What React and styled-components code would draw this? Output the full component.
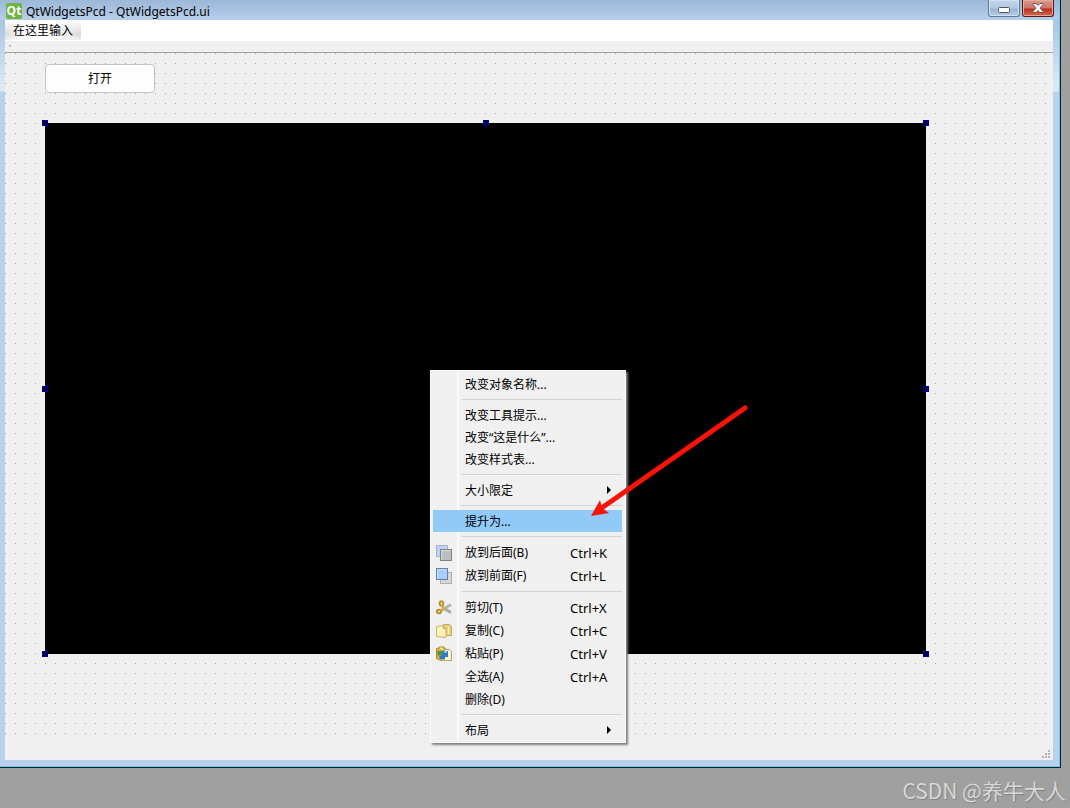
import React from "react";
import styled, { createGlobalStyle } from "styled-components";

const menuItems = [
	{ label: "改变对象名称..." },
	{ divider: true },
	{ label: "改变工具提示..." },
	{ label: "改变“这是什么”..." },
	{ label: "改变样式表..." },
	{ divider: true },
	{ label: "大小限定", submenu: true },
	{ divider: true },
	{ label: "提升为...", active: true },
	{ divider: true },
	{ label: "放到后面(B)", keys: "Ctrl+K", icon: <BackIcon /> },
	{ label: "放到前面(F)", keys: "Ctrl+L", icon: <FrontIcon /> },
	{ divider: true },
	{ label: "剪切(T)", keys: "Ctrl+X", icon: <CutIcon /> },
	{ label: "复制(C)", keys: "Ctrl+C", icon: <CopyIcon /> },
	{ label: "粘贴(P)", keys: "Ctrl+V", icon: <PasteIcon /> },
	{ label: "全选(A)", keys: "Ctrl+A" },
	{ label: "删除(D)" },
	{ divider: true },
	{ label: "布局", submenu: true },
];

const handles = [
	["0%", "0%"],
	["50%", "0%"],
	["100%", "0%"],
	["0%", "50%"],
	["100%", "50%"],
	["0%", "100%"],
	["100%", "100%"],
];

function BackIcon() {
	return (
		<svg width="16" height="16" viewBox="0 0 16 16">
			<rect x="0.5" y="0.5" width="11" height="11" fill="#bdd3f5" stroke="#a3b4d0" />
			<rect x="4.5" y="4.5" width="11" height="11" fill="#bcbfc1" stroke="#808385" />
			<path d="M5.5 14.5v-9h9" fill="none" stroke="#d6d8d9" />
		</svg>
	);
}

function FrontIcon() {
	return (
		<svg width="16" height="16" viewBox="0 0 16 16">
			<rect x="4.5" y="4.5" width="11" height="11" fill="#d5d7d8" stroke="#b0b2b3" />
			<rect x="0.5" y="0.5" width="11" height="11" fill="#a9cdfb" stroke="#6880a8" />
			<path d="M1.5 10.5v-9h9" fill="none" stroke="#c5defc" />
		</svg>
	);
}

function CutIcon() {
	return (
		<svg width="16" height="16" viewBox="0 0 16 16" fill="none">
			<path d="M6 10 15 4.5" stroke="#96968c" strokeWidth="2.6" />
			<path d="M6 10 15 4.5" stroke="#d4d4ca" strokeWidth="1" />
			<path d="M7 8 15 12.500" stroke="#96968c" strokeWidth="2.6" />
			<path d="M7 8 15 12.500" stroke="#c8c8bd" strokeWidth="1" />
			<ellipse cx="5.500" cy="3.500" rx="1.800" ry="2.300" stroke="#b8922c" strokeWidth="2" />
			<ellipse cx="3" cy="11.500" rx="2.200" ry="1.800" stroke="#b8922c" strokeWidth="2" />
			<path d="M6 6 8 8.500 5 10.500" stroke="#cfae4c" strokeWidth="2.600" />
		</svg>
	);
}

function CopyIcon() {
	return (
		<svg width="16" height="16" viewBox="0 0 16 16" strokeLinejoin="round">
			<path d="M7.5 1.5h6l2 2v9h-8z" fill="#e9d282" stroke="#c3a957" />
			<path d="M12.5 4v7" stroke="#fff2bd" />
			<path d="M.5 3.5 7 2.5l3 2.5v9.5l-9.500-1z" fill="#fff2bd" stroke="#cbb267" />
			<path d="m7 2.5.5 3L10 5" fill="#e4c463" stroke="#c4a955" />
		</svg>
	);
}

function PasteIcon() {
	return (
		<svg width="16" height="16" viewBox="0 0 16 16" strokeLinejoin="round">
			<path d="M.5 2.5 7 1l3 2v10l-5 1.500-4.500-2z" fill="#d8b537" stroke="#ab8d2c" />
			<path d="M3 3V1h5v2.500" fill="#f0e4a8" stroke="#a59246" />
			<path d="M8.500 3.500h5l2 2v9h-7z" fill="#fff6cf" stroke="#b5a268" />
			<path d="M1.500 5h5.500v4.500h-5.500z" fill="#4d914d" />
			<path d="M3 10c2 0 4-1 4-3V5h5v6H9v2H4z" fill="#3277c8" />
			<path d="M8 5h3v2H8z" fill="#8ab8e8" />
		</svg>
	);
}

function ContextMenu() {
	return (
		<Menu role="menu">
			{menuItems.map((item, i) =>
				item.divider ? (
					<Divider key={i} role="separator" />
				) : (
					<MenuItem
						key={i}
						role="menuitem"
						$active={item.active}
						$tall={item.keys}
					>
						<MenuIcon>{item.icon}</MenuIcon>
						<span>{item.label}</span>
						<Shortcut>{item.keys}</Shortcut>
						{item.submenu && (
							<SubArrow viewBox="0 0 4 8">
								<path d="M0 0v8l4-4z" />
							</SubArrow>
						)}
					</MenuItem>
				)
			)}
		</Menu>
	);
}

function App() {
	return (
		<>
			<GlobalStyle />
			<Desktop>
				<Window>
					<TitleBar>
						<QtLogo>Qt</QtLogo>
						<Title>QtWidgetsPcd - QtWidgetsPcd.ui</Title>
						<Controls>
							<ControlButton aria-label="最小化">
								<svg width="12" height="6" viewBox="0 0 12 6">
									<rect x="0.5" y="0.5" width="11" height="5" rx="1" fill="#fff" stroke="#4c5866" />
								</svg>
							</ControlButton>
							<ControlButton $close aria-label="关闭">
								<svg width="12" height="10" viewBox="0 0 12 10">
									<path
										d="M1 .5h3l2 2 2-2h3v1L8 5l3 3.5v1H8l-2-2-2 2H1v-1L4 5 1 1.5z"
										fill="#fff"
										stroke="#59454c"
										strokeWidth="0.8"
									/>
								</svg>
							</ControlButton>
						</Controls>
					</TitleBar>
					<Client>
						<MenuBar>
							<MenuBarItem>在这里输入</MenuBarItem>
						</MenuBar>
						<ToolBar />
						<Form>
							<OpenButton>打开</OpenButton>
							<Viewer>
								{handles.map(([x, y]) => (
									<Handle key={x + y} $x={x} $y={y} />
								))}
								<ContextMenu />
								<Arrow viewBox="0 0 160 114">
									<path d="M155 4 13 103" stroke="#fb1208" strokeWidth="5" strokeLinecap="round" />
									<path d="M1 112 10 96l2 8 7 5z" fill="#fb1208" />
								</Arrow>
							</Viewer>
						</Form>
						<StatusBar>
							<svg width="9" height="9" viewBox="0 0 9 9" fill="#b4b4b4">
								<path d="M6 0h2v2H6zM3 3h2v2H3zM6 3h2v2H6zM0 6h2v2H0zM3 6h2v2H3zM6 6h2v2H6z" />
							</svg>
						</StatusBar>
					</Client>
				</Window>
				<Watermark>CSDN @养牛大人</Watermark>
			</Desktop>
		</>
	);
}

export default App;

const GlobalStyle = createGlobalStyle`
	* {
		box-sizing: border-box;
	}
	body {
		margin: 0;
		background: #a0a0a0;
		color: #000;
		font-family: "Noto Sans", "Noto Sans CJK SC", sans-serif;
		font-size: 12px;
	}
	button {
		font: inherit;
		color: inherit;
		padding: 0;
	}
	svg {
		display: block;
	}
`;

const Desktop = styled.main`
	min-height: 100vh;
	background: #a0a0a0;
	padding-right: 9px;
	overflow: hidden;
`;
const Window = styled.section`
	border-right: 1px solid #0b2228;
	border-bottom: 1px solid #0b2228;
	box-shadow: inset -1px -1px 0 #62cdec;
	padding: 0 7px 7px 5px;
	background: linear-gradient(#a3bfdf 0, #a9c4e2 20px, #e0eaf5 91px, #b9d1ea 92px);
`;
const TitleBar = styled.header`
	display: flex;
	align-items: flex-start;
	height: 20px;
	margin: 0 -6px 0 -5px;
	padding-left: 6px;
	background: linear-gradient(#9cb8d8, #b6cee8);
`;
const QtLogo = styled.span`
	width: 16px;
	height: 16px;
	margin-top: 3px;
	border-radius: 2px;
	background: #6fb544;
	color: #fff;
	font-family: "Open Sans", sans-serif;
	font-weight: bold;
	line-height: 15px;
	text-align: center;
`;
const Title = styled.h1`
	flex: 1;
	margin: 4px 0 0 4px;
	font-size: 12px;
	font-weight: normal;
	line-height: 16px;
`;
const Controls = styled.div`
	display: flex;
	gap: 2px;
	padding-right: 5px;
`;
const ControlButton = styled.button`
	display: flex;
	align-items: center;
	justify-content: center;
	width: 32px;
	height: 17px;
	padding-top: ${(p) => (p.$close ? 0 : 3)}px;
	border: 1px solid ${(p) => (p.$close ? "#501d25" : "#617894")};
	border-top: 0;
	border-radius: 0 0 3px 3px;
	box-shadow: inset 0 0 0 1px ${(p) => (p.$close ? "#e8a69a" : "#d3e2f2")};
	background: ${(p) =>
		p.$close
			? "linear-gradient(#d99a90 0, #cf7468 8px, #b8311d 9px, #d56a4a)"
			: "linear-gradient(#c1d4e9 0, #b3c9e2 8px, #98b4d3 9px, #b4cce6)"};
`;
const Client = styled.div`
	background: #f0f0f0;
`;
const MenuBar = styled.nav`
	display: flex;
	height: 21px;
	background: #fff;
`;
const MenuBarItem = styled.button`
	width: 76px;
	height: 20px;
	border: 0;
	background: linear-gradient(90deg, transparent, #fff 30%, #fff 55%, transparent),
		linear-gradient(#fff, #d8d8d8 70%, #eeeeee);
`;
const ToolBar = styled.div`
	height: 12px;
	border-bottom: 1px solid #a0a0a0;
	background: radial-gradient(circle at 5px 5px, #b8b8b8 1px, transparent 1px);
`;
/* designer grid, one dot every 10px */
const Form = styled.div`
	padding: 11px 127px 81px 40px;
	background: conic-gradient(at 1px 1px, transparent 75%, #a6a6a6 0) 0 0 / 10px
		10px;
`;
const OpenButton = styled.button`
	display: block;
	width: 110px;
	height: 29px;
	padding-bottom: 2px;
	border: 1px solid #c4c4c4;
	border-radius: 4px;
	background: #fdfdfd;
`;
const Viewer = styled.div`
	position: relative;
	height: 531px;
	margin-top: 30px;
	background: #000;
`;
const Handle = styled.i`
	position: absolute;
	left: ${(p) => p.$x};
	top: ${(p) => p.$y};
	width: 6px;
	height: 6px;
	margin: -3px;
	border: 1px solid #00008b;
	background: #00004c;
`;
const Menu = styled.div`
	position: absolute;
	left: 385px;
	top: 247px;
	width: 196px;
	padding: 2px 3px 1px 2px;
	border: 1px solid #fafafa;
	background: linear-gradient(#fafafa, #fafafa) 26px 0 / 2px 100% no-repeat
		#f0f0f0;
	box-shadow: 2px 2px 2px #808080;
`;
const MenuItem = styled.button`
	display: flex;
	align-items: center;
	width: 100%;
	height: ${(p) => (p.$tall ? 23 : 22)}px;
	padding-top: ${(p) => (p.$tall ? 0 : 2)}px;
	border: 0;
	background: ${(p) => (p.$active ? "#91c9f7" : "transparent")};
	text-align: left;
	line-height: 20px;
	white-space: nowrap;
`;
const MenuIcon = styled.span`
	flex: none;
	width: 32px;
	padding-left: 3px;
`;
const Shortcut = styled.span`
	width: 52px;
	margin-left: auto;
	font-size: 13px;
`;
const SubArrow = styled.svg`
	width: 4px;
	height: 8px;
	margin: -2px 11px 0 -15px;
`;
const Divider = styled.div`
	height: 9px;
	margin-left: 28px;
	padding: 4px 0;
	background: #d4d4d4 content-box;
`;
const Arrow = styled.svg`
	position: absolute;
	left: 545px;
	top: 281px;
	width: 160px;
	height: 114px;
	fill: none;
	pointer-events: none;
`;
const StatusBar = styled.footer`
	display: flex;
	align-items: flex-end;
	justify-content: flex-end;
	height: 25px;
	padding: 0 2px 1px;
`;
const Watermark = styled.p`
	margin: 7px -5px 0 0;
	color: #d8d8d8;
	font-family: "Noto Sans CJK SC", sans-serif;
	font-size: 21px;
	line-height: 30px;
	text-align: right;
	text-shadow: 1px 1px 1px #808080;
`;
